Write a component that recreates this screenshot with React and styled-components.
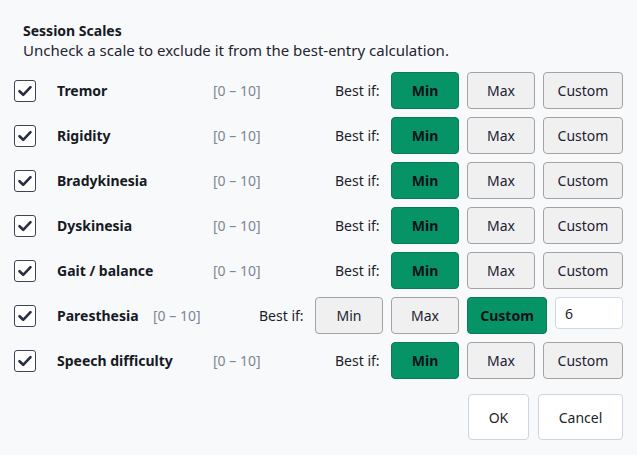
import React, { useState } from "react";
import styled, { createGlobalStyle } from "styled-components";

const Global = createGlobalStyle`
  html, body { margin: 0; padding: 0; background: #f8f9fb; }
  body { font-family: "Noto Sans", "Open Sans", sans-serif; color: #1b1f2a; }
  * { box-sizing: border-box; }
`;

const Dialog = styled.div`
  width: 637px;
  height: 455px;
  padding: 21px 14px 0 14px;
  background: #f8f9fb;
`;

const Header = styled.div`
  padding-left: 9px;
  margin-bottom: 12px;
`;

const Title = styled.div`
  font-size: 14px;
  font-weight: 700;
  line-height: 20px;
  color: #161a24;
`;

const Subtitle = styled.div`
  font-size: 15px;
  line-height: 19px;
  color: #1f2430;
`;

const Rows = styled.div`
  display: flex;
  flex-direction: column;
  gap: 8px;
`;

const Row = styled.div`
  display: flex;
  align-items: center;
  height: 37px;
`;

const Box = styled.button`
  width: 22px;
  height: 22px;
  flex: none;
  padding: 0;
  margin-right: 21px;
  border: 1.5px solid #3b4556;
  border-radius: 3px;
  background: #ffffff;
  display: flex;
  align-items: center;
  justify-content: center;
  cursor: pointer;
`;

const Name = styled.div`
  flex: 0 1 143px;
  min-width: min-content;
  margin-right: 13px;
  font-size: 14px;
  font-weight: 700;
  color: #161a24;
  white-space: nowrap;
`;

const Range = styled.div`
  flex: none;
  width: 48px;
  font-size: 14px;
  color: #7d8694;
  white-space: nowrap;
`;

const Spacer = styled.div`
  flex: 1 0 58px;
`;

const BestLabel = styled.div`
  flex: none;
  width: 56px;
  font-size: 14px;
  color: #1b1f2a;
  white-space: nowrap;
`;

const Choices = styled.div`
  display: flex;
  gap: 8px;
  flex: none;
`;

const Choice = styled.button`
  height: 37px;
  width: ${(p) => p.$w}px;
  border-radius: 4px;
  font-family: inherit;
  font-size: 14px;
  cursor: pointer;
  padding: 0;
  border: 1.5px solid ${(p) => (p.$on ? "#0b7a56" : "#a3a3a3")};
  background: ${(p) => (p.$on ? "#069466" : "#f0f0f0")};
  color: ${(p) => (p.$on ? "#0d1117" : "#1c2233")};
  font-weight: ${(p) => (p.$on ? 700 : 400)};
`;

const ValueInput = styled.input`
  width: 68px;
  height: 32px;
  border: 1px solid #cfd8e4;
  border-radius: 4px;
  background: #ffffff;
  font-family: inherit;
  font-size: 14px;
  color: #1b1f2a;
  padding: 0 0 0 9px;
  outline: none;
`;

const Footer = styled.div`
  display: flex;
  justify-content: flex-end;
  gap: 9px;
  margin-top: 15px;
`;

const FooterButton = styled.button`
  height: 46px;
  width: ${(p) => p.$w}px;
  border: 1px solid #ccd6e2;
  border-radius: 4px;
  background: #ffffff;
  font-family: inherit;
  font-size: 14px;
  color: #1b1f2a;
  cursor: pointer;
`;

const Check = () => (
  <svg width="16" height="16" viewBox="0 0 16 16">
    <path
      d="M2.5 8.2 L6.2 11.8 L13.5 4.2"
      fill="none"
      stroke="#273040"
      strokeWidth="2.6"
      strokeLinecap="round"
      strokeLinejoin="round"
    />
  </svg>
);

const scales = [
  { name: "Tremor", mode: "min" },
  { name: "Rigidity", mode: "min" },
  { name: "Bradykinesia", mode: "min" },
  { name: "Dyskinesia", mode: "min" },
  { name: "Gait / balance", mode: "min" },
  { name: "Paresthesia", mode: "custom", value: "6" },
  { name: "Speech difficulty", mode: "min" },
];

function ScaleRow({ scale }) {
  const [mode, setMode] = useState(scale.mode);
  return (
    <Row>
      <Box aria-label="include">
        <Check />
      </Box>
      <Name>{scale.name}</Name>
      <Range>[0 – 10]</Range>
      <Spacer />
      <BestLabel>Best if:</BestLabel>
      <Choices>
        <Choice $w={68} $on={mode === "min"} onClick={() => setMode("min")}>Min</Choice>
        <Choice $w={68} $on={mode === "max"} onClick={() => setMode("max")}>Max</Choice>
        <Choice $w={80} $on={mode === "custom"} onClick={() => setMode("custom")}>Custom</Choice>
        {mode === "custom" && <ValueInput defaultValue={scale.value || ""} />}
      </Choices>
    </Row>
  );
}

export default function App() {
  return (
    <>
      <Global />
      <Dialog>
        <Header>
          <Title>Session Scales</Title>
          <Subtitle>Uncheck a scale to exclude it from the best-entry calculation.</Subtitle>
        </Header>
        <Rows>
          {scales.map((s) => (
            <ScaleRow key={s.name} scale={s} />
          ))}
        </Rows>
        <Footer>
          <FooterButton $w={61}>OK</FooterButton>
          <FooterButton $w={85}>Cancel</FooterButton>
        </Footer>
      </Dialog>
    </>
  );
}
